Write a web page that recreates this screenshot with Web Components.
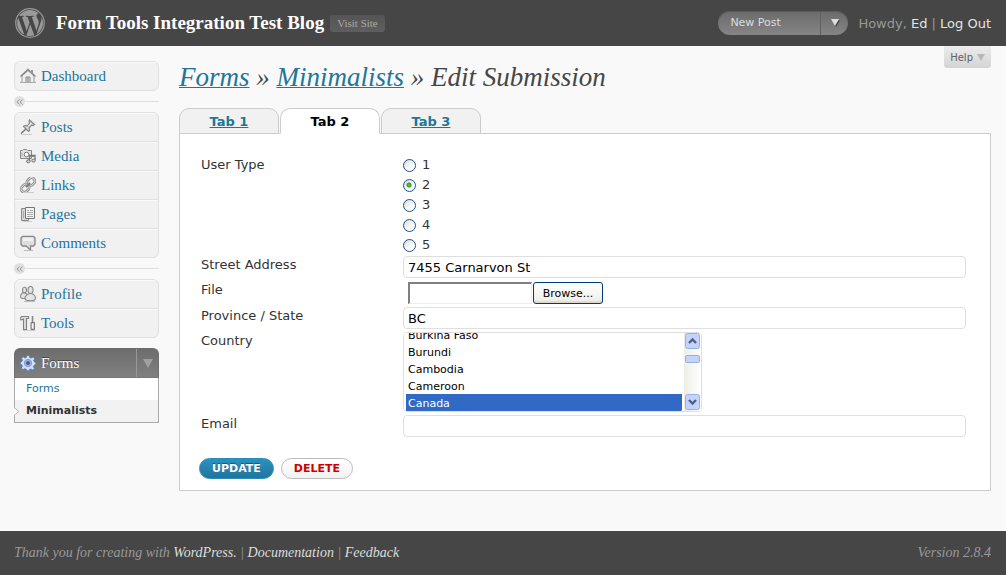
<!DOCTYPE html>
<html lang="en">
<head>
<meta charset="utf-8">
<title>Edit Submission</title>
<style>
  html, body { margin: 0; }
  body {
    background: #f9f9f9;
    color: #333;
    font-family: "DejaVu Sans", sans-serif;
    font-size: 13px;
    --serif: "Liberation Serif", serif;
    --link: #21759b;
    --dark: #464646;
  }
</style>
</head>
<body>
<wp-admin>
  <wp-header slot="header" blog="Form Tools Integration Test Blog" user="Ed"></wp-header>

  <wp-menu slot="menu">
    <wp-menu-group>
      <wp-menu-item icon="dashboard">Dashboard</wp-menu-item>
    </wp-menu-group>
    <wp-menu-separator></wp-menu-separator>
    <wp-menu-group>
      <wp-menu-item icon="posts">Posts</wp-menu-item>
      <wp-menu-item icon="media">Media</wp-menu-item>
      <wp-menu-item icon="links">Links</wp-menu-item>
      <wp-menu-item icon="pages">Pages</wp-menu-item>
      <wp-menu-item icon="comments">Comments</wp-menu-item>
    </wp-menu-group>
    <wp-menu-separator></wp-menu-separator>
    <wp-menu-group>
      <wp-menu-item icon="profile">Profile</wp-menu-item>
      <wp-menu-item icon="tools">Tools</wp-menu-item>
    </wp-menu-group>
    <wp-open-menu heading="Forms">
      <wp-submenu-item>Forms</wp-submenu-item>
      <wp-submenu-item current>Minimalists</wp-submenu-item>
    </wp-open-menu>
  </wp-menu>

  <page-title>
    <a href="#forms">Forms</a> » <a href="#minimalists">Minimalists</a> » Edit Submission
  </page-title>
  <tab-bar>
    <tab-item>Tab 1</tab-item>
    <tab-item current>Tab 2</tab-item>
    <tab-item>Tab 3</tab-item>
  </tab-bar>
  <submission-form></submission-form>

  <wp-footer slot="footer"></wp-footer>
</wp-admin>

<script>
const define = (name, html, setup) => {
  const template = document.createElement('template');
  template.innerHTML = html;
  customElements.define(name, class extends HTMLElement {
    constructor() {
      super();
      this.attachShadow({ mode: 'open' }).append(template.content.cloneNode(true));
    }
    connectedCallback() {
      if (setup) setup(this, this.shadowRoot);
    }
  });
};

/* Menu icons, all on a 16 x 16 grid */
const ICONS = {
  dashboard: `<path d="M2 8v6.500h12V8L8 2.500z" fill="#eee" stroke="#999"/><path d="M.5 8.500L8 1.500l7.500 7" fill="none" stroke="#888" stroke-width="1.400"/><path d="M12 2v3" stroke="#999" stroke-width="2"/><path d="M6 14.500V9h4v5.500M8 9v5" fill="#ddd" stroke="#888"/><path d="M0 14.500h16" stroke="#aaa"/>`,
  posts: `<path d="M9.500 1l5 4.500-1.500 1-1.500-.3-2.300 2.600.3 2.700-1 1L3.500 7.500l1-1 3 .2L9.500 4.300 9 2.500z" fill="#d5d5d5" stroke="#888" stroke-width="1.200"/><path d="M6 10L1 14.500" stroke="#777" stroke-width="1.500"/><path d="M8.500 7l2.500-2.700" stroke="#fff"/><path d="M1 15.500h11" stroke="#ccc"/>`,
  media: `<path d="M.5 2.500h2l1-1h3l1 1h4v8H.500z" fill="#e4e4e4" stroke="#888"/><circle cx="6.500" cy="6.500" r="2.300" fill="#fff" stroke="#777"/><path d="M2 4.500v4" stroke="#aaa"/><path d="M9.500 13V7.500h5.500V12" fill="none" stroke="#777" stroke-width="1.300"/><path d="M9.500 8.500h5" stroke="#888"/><ellipse cx="8.300" cy="13.300" rx="1.800" ry="1.500" fill="#ccc" stroke="#777"/><ellipse cx="13.500" cy="12.600" rx="1.800" ry="1.500" fill="#ccc" stroke="#777"/>`,
  links: `<g fill="none" transform="rotate(-45 8 8)"><rect x="8" y="4.500" width="8.500" height="6.500" rx="3.200" stroke="#808080" stroke-width="2.600"/><rect x="8" y="4.500" width="8.500" height="6.500" rx="3.200" stroke="#ddd" stroke-width="1"/><rect x="-.5" y="5" width="8.500" height="6.500" rx="3.200" stroke="#808080" stroke-width="2.600"/><rect x="-.5" y="5" width="8.500" height="6.500" rx="3.200" stroke="#ddd" stroke-width="1"/><path d="M5 8h6" stroke="#777" stroke-width="1.600"/></g><path d="M3 15.500h11" stroke="#ccc"/>`,
  pages: `<path d="M1.500 2.500h7v12h-7z" fill="#d5d5d5" stroke="#888"/><path d="M3.500 5v7" stroke="#aaa"/><path d="M5.500 1.500h9v11h-9z" fill="#f4f4f4" stroke="#777"/><path d="M7 4.500h2M10 4.500h3M7 6.500h6M7 8.500h6M7 10.500h6" stroke="#aaa"/><path d="M3 15.500h9" stroke="#ccc"/>`,
  comments: `<path d="M2.500 1.500h11l1.500 1.500v6.500L13.500 11h-3v4L6 11H2.500L1 9.500V3z" fill="#ddd" stroke="#888" stroke-width="1.300"/><path d="M3 3.500h10M3 5h10" stroke="#f2f2f2" stroke-width="2"/><path d="M4 15.500h9" stroke="#bbb"/>`,
  profile: `<g fill="#e4e4e4" stroke="#888" stroke-width="1.100"><path d="M4 6.500C0 7 0 12 2 12.500h5V8z"/><ellipse cx="4.500" cy="4" rx="2" ry="2.800"/><path d="M10 7.500c-5 1-6 5-4 6.500 2 1 6.500 1 8.500 0 2-2 .5-5.500-3-6.500z"/><ellipse cx="10.500" cy="4" rx="2.500" ry="3.500"/></g><path d="M4 15.500h11" stroke="#bbb"/>`,
  tools: `<path d="M0 3.500L1.500 1.500H8.500v2H6.500V14.500H3.500V4L1 5z" fill="#ddd" stroke="#808080" stroke-width="1.100"/><path d="M12.500 1v6" fill="none" stroke="#888" stroke-width="1.600"/><path d="M11 7.500h3.500v7H11z" fill="#ccc" stroke="#777"/><path d="M12.700 9v4" stroke="#fff"/><path d="M3 15.500h12" stroke="#ccc"/>`
};

define('wp-admin', `
  <style>
    :host { display: flex; flex-direction: column; min-height: 100vh; }
    .body { flex: 1; display: flex; align-items: flex-start; gap: 20px; padding: 15px 15px 40px 14px; }
    nav { flex: none; width: 145px; }
    main { flex: 1; min-width: 0; }
  </style>
  <slot name="header"></slot>
  <div class="body">
    <nav><slot name="menu"></slot></nav>
    <main><slot></slot></main>
  </div>
  <slot name="footer"></slot>
`);

define('wp-header', `
  <style>
    :host { display: block; }
    header { position: relative; display: flex; align-items: center; height: 46px; padding: 0 15px; background: var(--dark); color: #999; }
    a { color: #e4e4e4; text-decoration: none; }
    .logo { width: 30px; height: 30px; flex: none; }
    h1 { margin: 0 6px 0 11px; font: bold 19px/24px var(--serif); }
    h1 a { color: #fff; }
    .visit { padding: 0 7px; font: 11px/17px var(--serif); color: #aaa; background: linear-gradient(#555, #5e5e5e); border-radius: 3px; }
    .new { display: flex; align-items: stretch; margin-left: auto; height: 24px; border-radius: 12px; overflow: hidden;
      background: linear-gradient(#6b6b6b, #858585); box-shadow: inset 0 1px 1px #5a5a5a; }
    .new a { flex: none; width: 90px; padding-left: 12px; font-size: 11px; line-height: 24px; color: #ddd; }
    .new button { width: 28px; padding: 0 0 0 1px; border: 0; border-left: 1px solid #606060; background: none; }
    .new svg { display: block; margin: auto; }
    p { margin: 0 0 0 10px; white-space: nowrap; }
    .help { position: absolute; right: 15px; top: 46px; display: flex; align-items: center; gap: 4px; height: 22px; padding: 0 6px;
      border: 0; border-radius: 0 0 3px 3px; background: linear-gradient(#ececec, #d4d4d4); color: #606060; font: inherit; font-size: 10px; }
  </style>
  <header>
    <svg class="logo" viewBox="0 0 24 24" fill="#999" aria-hidden="true">
      <circle cx="12" cy="12" r="11.400" fill="none" stroke="#999" stroke-width="1"/>
      <path transform="translate(.5 .5) scale(.96)" d="M21.469 6.825c.84 1.537 1.318 3.300 1.318 5.175 0 3.979-2.156 7.456-5.363 9.325l3.295-9.527c.615-1.540.820-2.771.820-3.864 0-.405-.026-.780-.070-1.110m-7.981.105c.647-.030 1.232-.105 1.232-.105.582-.075.514-.930-.067-.899 0 0-1.755.135-2.880.135-1.064 0-2.850-.150-2.850-.150-.585-.030-.661.855-.075.885 0 0 .540.061 1.125.090l1.680 4.605-2.370 7.080L5.354 6.900c.649-.030 1.234-.100 1.234-.100.585-.075.516-.930-.065-.896 0 0-1.746.138-2.874.138-.200 0-.438-.008-.690-.015C4.911 3.150 8.235 1.215 12 1.215c2.809 0 5.365 1.072 7.286 2.833-.046-.003-.091-.009-.141-.009-1.060 0-1.812.923-1.812 1.914 0 .890.513 1.643 1.060 2.531.411.720.890 1.643.890 2.977 0 .915-.354 1.994-.821 3.479l-1.075 3.585-3.900-11.610.001.014zM12 22.784c-1.059 0-2.081-.153-3.048-.437l3.237-9.406 3.315 9.087c.024.053.050.101.078.149-1.120.393-2.325.609-3.582.609M1.211 12c0-1.564.336-3.050.935-4.390L7.290 21.709C3.694 19.960 1.212 16.271 1.211 12"/>
    </svg>
    <h1><a href="#home" id="blog"></a></h1>
    <a class="visit" href="#site">Visit Site</a>
    <div class="new">
      <a href="#new-post">New Post</a>
      <button type="button" aria-label="More actions"><svg width="9" height="8" viewBox="0 0 9 8"><path d="M1.500 1.500h7.500L5 8z" fill="#444"/><path d="M0 0h8L4 7z" fill="#ddd"/></svg></button>
    </div>
    <p>Howdy, <a href="#profile" id="user"></a> | <a href="#logout">Log Out</a></p>
    <button class="help" type="button">Help <svg width="8" height="7" viewBox="0 0 8 7" aria-hidden="true"><path d="M0 0h8L4 7z" fill="#b8b8b8"/></svg></button>
  </header>
`, (host, root) => {
  root.getElementById('blog').textContent = host.getAttribute('blog');
  root.getElementById('user').textContent = host.getAttribute('user');
});

define('wp-menu', `
  <style>:host { display: block; }</style>
  <slot></slot>
`);

define('wp-menu-group', `
  <style>
    :host { display: block; border: 1px solid #e0e0e0; border-radius: 6px; background: #f1f1f1; overflow: hidden; }
    ::slotted(:not(:first-child)) { border-top: 1px solid #dfdfdf; }
  </style>
  <slot></slot>
`);

define('wp-menu-item', `
  <style>
    :host { display: block; font: 15px/27px var(--serif); }
    a { display: flex; align-items: center; gap: 5px; height: 28px; padding-left: 5px; box-sizing: border-box; color: var(--link); text-decoration: none; box-shadow: inset 0 1px #fafafa; }
    svg { width: 16px; height: 16px; flex: none; }
  </style>
  <a><svg viewBox="0 0 16 16" aria-hidden="true"></svg><slot></slot></a>
`, (host, root) => {
  root.querySelector('svg').innerHTML = ICONS[host.getAttribute('icon')];
  root.querySelector('a').href = '#' + host.getAttribute('icon');
});

define('wp-menu-separator', `
  <style>
    :host { display: flex; align-items: center; height: 21px; }
    button { width: 11px; height: 11px; padding: 0; border: 0; border-radius: 50%; background: #e0e0e0; flex: none; }
    svg { display: block; margin: auto; }
    i { flex: 1; height: 1px; background: #dfdfdf; }
  </style>
  <button type="button" aria-label="Collapse menu"><svg width="7" height="6" viewBox="0 0 7 6" fill="none" stroke="#999"><path d="M3.500.5L1 3l2.500 2.500M6.500.5L4 3l2.500 2.500"/></svg></button>
  <i></i>
`);

define('wp-open-menu', `
  <style>
    :host { display: block; margin-top: 10px; }
    .head { display: flex; height: 30px; border-radius: 6px 6px 0 0; background: linear-gradient(#6d6d6d, #808080); overflow: hidden; box-sizing: border-box; border: 1px solid #6d6d6d; border-bottom-color: #777; }
    .head a { flex: 1; display: flex; align-items: center; gap: 5px; padding-left: 5px; color: #fff; font: 15px/27px var(--serif); text-decoration: none; text-shadow: 0 -1px 0 #444; }
    .head button { width: 22px; padding: 0; border: 0; border-left: 1px solid #999; background: none; }
    .head button svg { display: block; margin: auto; }
    .items { border: 1px solid #aaa; border-top: 0; background: #fff; }
  </style>
  <div class="head">
    <a href="#forms">
      <svg width="16" height="16" viewBox="0 0 16 16" aria-hidden="true"><path d="M6.800.5h2.400l.5 2 1.500.6L13 2l1.700 1.700-1.100 1.800.6 1.300 1.500.5v2.400l-1.700.5-.6 1.500 1.100 1.800L12.700 15l-1.800-1-1.300.6-.5 1.200H6.800l-.5-1.500-1.500-.6L3 14.700 1.300 13l1.100-1.800-.6-1.400-1.500-.5V7l1.600-.5.6-1.500L1.400 3.400 3.200 1.800 4.900 3l1.400-.6z" fill="#cfe0fb" stroke="#4a6fb5" stroke-width=".7"/><circle cx="8" cy="8" r="3.600" fill="#9db6e6" stroke="#7e9bd6"/><circle cx="8" cy="8" r="2" fill="#555d70"/></svg>
      <span></span>
    </a>
    <button type="button" aria-label="Toggle submenu"><svg width="10" height="9" viewBox="0 0 10 9"><path d="M0 0h10L5 9z" fill="#a0a0a0"/></svg></button>
  </div>
  <div class="items"><slot></slot></div>
`, (host, root) => {
  root.querySelector('span').textContent = host.getAttribute('heading');
});

define('wp-submenu-item', `
  <style>
    :host { display: block; position: relative; font-size: 11px; line-height: 22px; }
    a { display: block; padding-left: 11px; color: var(--link); text-decoration: none; }
    svg { display: none; position: absolute; left: -1px; top: 7px; }
    :host([current]) { background: #f2f2f2; }
    :host([current]) a { color: #333; font-weight: bold; }
    :host([current]) svg { display: block; }
  </style>
  <a href="#list"><slot></slot></a>
  <svg width="6" height="9" viewBox="0 0 6 9" aria-hidden="true"><path d="M0 .5l5 4-5 4" fill="#f9f9f9" stroke="#b4b4b4"/></svg>
`);

define('page-title', `
  <style>
    :host { display: block; }
    h2 { margin: 0 0 15px; font: italic 27px/32px var(--serif); color: #464646; }
    ::slotted(a) { color: var(--link); text-decoration-thickness: 1px; }
  </style>
  <h2><slot></slot></h2>
`);

define('tab-bar', `
  <style>
    :host { display: flex; gap: 1px; margin-bottom: -1px; position: relative; }
  </style>
  <slot></slot>
`);

define('tab-item', `
  <style>
    :host { width: 100px; height: 26px; box-sizing: border-box; border: 1px solid #ccc; border-radius: 10px 10px 0 0; background: #f1f1f1; text-align: center; font-weight: bold; line-height: 25px; }
    a { color: var(--link); }
    :host([current]) { background: #fff; border-bottom-color: #fff; }
    :host([current]) a { color: #000; text-decoration: none; }
  </style>
  <a href="#tab"><slot></slot></a>
`);

const COUNTRIES = `Afghanistan|Albania|Algeria|American Samoa|Andorra|Angola|Anguilla|Antarctica|Antigua and Barbuda|Argentina|Armenia|Aruba|Australia|Austria|Azerbaijan|Bahamas|Bahrain|Bangladesh|Barbados|Belarus|Belgium|Belize|Benin|Bermuda|Bhutan|Bolivia|Bosnia and Herzegovina|Botswana|Brazil|Brunei|Bulgaria|Burkina Faso|Burundi|Cambodia|Cameroon|Canada|Cape Verde|Cayman Islands|Central African Republic|Chad|Chile|China|Christmas Island|Colombia|Comoros|Congo|Cook Islands|Costa Rica|Croatia|Cuba|Cyprus|Czech Republic|Denmark|Djibouti|Dominica|Dominican Republic|Ecuador|Egypt|El Salvador|Equatorial Guinea|Eritrea|Estonia|Ethiopia|Falkland Islands|Faroe Islands|Fiji|Finland|France|French Guiana|French Polynesia|Gabon|Gambia|Georgia|Germany|Ghana|Gibraltar|Greece|Greenland|Grenada|Guadeloupe|Guam|Guatemala|Guinea|Guyana|Haiti|Honduras|Hong Kong|Hungary|Iceland|India|Indonesia|Iran|Iraq|Ireland|Israel|Italy|Jamaica|Japan|Jordan|Kazakhstan|Kenya|Kiribati|Kuwait|Kyrgyzstan|Laos|Latvia|Lebanon|Lesotho|Liberia|Libya|Liechtenstein|Lithuania|Luxembourg|Macau|Macedonia|Madagascar|Malawi|Malaysia|Maldives|Mali|Malta|Marshall Islands|Martinique|Mauritania|Mauritius|Mexico|Micronesia|Moldova|Monaco|Mongolia|Montserrat|Morocco|Mozambique|Myanmar|Namibia|Nauru|Nepal|Netherlands|New Caledonia|New Zealand|Nicaragua|Niger|Nigeria|Niue|Norfolk Island|Norway|Oman|Pakistan|Palau|Panama|Papua New Guinea|Paraguay|Peru|Philippines|Poland|Portugal|Puerto Rico|Qatar|Reunion|Romania|Russia|Rwanda|Saint Lucia|Samoa|San Marino|Saudi Arabia|Senegal|Seychelles|Sierra Leone|Singapore|Slovakia|Slovenia|Solomon Islands|Somalia|South Africa|South Korea|Spain|Sri Lanka|Sudan|Suriname|Swaziland|Sweden|Switzerland|Syria|Taiwan|Tajikistan|Tanzania|Thailand|Togo|Tokelau|Tonga|Trinidad and Tobago|Tunisia|Turkey|Turkmenistan|Tuvalu|Uganda|Ukraine|United Arab Emirates|United Kingdom|United States|Uruguay|Uzbekistan|Vanuatu|Venezuela|Vietnam|Yemen|Zambia|Zimbabwe`.split('|');

define('submission-form', `
  <style>
    :host { display: block; border: 1px solid #ccc; background: #fff; padding: 21px 24px 11px 19px; }
    form { margin: 0; }
    .row { display: grid; grid-template-columns: 204px 1fr; border: 0; margin: 0; padding: 0; line-height: 20px; }
    .name { padding-left: 2px; }
    .cell { padding: 1px 0 2px; display: flex; }
    .radios label { display: flex; align-items: center; gap: 6px; height: 20px; line-height: 22px; }
    input, select, button { font-family: inherit; box-sizing: border-box; margin: 0; }
    input[type=radio] { appearance: none; width: 13px; height: 13px; border: 1px solid #1d5281; border-radius: 50%; background: linear-gradient(135deg, #dcdcd7, #fff 70%); }
    input[type=radio]:checked { background: radial-gradient(circle at 5px 5px, #55d551, #21a121 2px, transparent 3px), linear-gradient(135deg, #dcdcd7, #fff 70%); }
    input[type=text] { width: 100%; height: 22px; padding: 0 4px; border: 1px solid #dfdfdf; border-radius: 4px; background: #fff; color: #000; font-size: 13px; }
    .file { height: 26px; box-sizing: border-box; padding-left: 5px; gap: 1px; }
    .file input[type=text] { width: 124px; height: 22px; margin-top: 1px; border-style: solid; border-color: #808080 #f1efe2 #f1efe2 #808080; border-width: 2px 1px 1px 2px; border-radius: 0; }
    .file button { width: 70px; height: 22px; margin-top: 1px; padding: 0; border: 1px solid #003c74; border-radius: 3px; background: linear-gradient(#fff, #f0f0ea 85%, #d6d0c5); color: #000; font-size: 11px; }
    .list { display: flex; gap: 2px; width: 299px; height: 80px; box-sizing: border-box; border: 1px solid #dfdfdf; border-radius: 4px; overflow: hidden; }
    select { flex: 1; min-width: 0; height: 78px; padding: 0 0 0 2px; border: 0; background: #fff; color: #000; font-size: 11px; outline: 0; scrollbar-width: none; }
    option { height: 17px; padding: 3px 2px 0; line-height: 14px; box-sizing: border-box; }
    option:checked { background: #316ac5 linear-gradient(#316ac5, #316ac5); color: #fff; }
    .bar { flex: none; width: 17px; display: flex; flex-direction: column; background: linear-gradient(90deg, #eeede5, #fff); }
    .bar button { height: 17px; padding: 0; border: 0; background: none; }
    .bar svg { display: block; }
    .track { flex: 1; padding: 5px 1px 0; }
    .thumb { height: 8px; box-sizing: border-box; border: 1px solid #98b1e4; border-radius: 2px; background: #c3d3fd; }
    .actions { display: flex; gap: 7px; margin-top: 19px; }
    .actions button { height: 21px; padding: 0 12px; border: 1px solid #bbb; border-radius: 11px; background: linear-gradient(#fff, #f2f2f2); color: #c00; font-size: 11px; font-weight: bold; }
    .actions .primary { border-color: #298cba; background: linear-gradient(#2a92c0, #21759b); color: #fff; text-shadow: 0 -1px 0 #1c5a78; }
  </style>
  <form>
    <div class="row" role="radiogroup" aria-labelledby="type-name">
      <span class="name" id="type-name">User Type</span>
      <div class="radios">
        <label><input type="radio" name="type" value="1">1</label>
        <label><input type="radio" name="type" value="2" checked>2</label>
        <label><input type="radio" name="type" value="3">3</label>
        <label><input type="radio" name="type" value="4">4</label>
        <label><input type="radio" name="type" value="5">5</label>
      </div>
    </div>
    <div class="row"><label class="name" for="street">Street Address</label><div class="cell"><input type="text" id="street" value="7455 Carnarvon St"></div></div>
    <div class="row"><label class="name" for="file">File</label><div class="cell file"><input type="text" id="file"><button type="button">Browse...</button></div></div>
    <div class="row"><label class="name" for="state">Province / State</label><div class="cell"><input type="text" id="state" value="BC"></div></div>
    <div class="row">
      <label class="name" for="country">Country</label>
      <div class="cell">
        <div class="list">
          <select id="country" size="5"></select>
          <div class="bar">
            <button type="button" id="up" aria-label="Scroll up"><svg width="17" height="17" viewBox="0 0 17 17"><rect x="1.500" y=".5" width="14" height="15" rx="2" fill="#c3d3fd" stroke="#98b1e4"/><path d="M5 10l3.500-3.500L12 10" fill="none" stroke="#4d6185" stroke-width="2.400"/></svg></button>
            <div class="track"><div class="thumb"></div></div>
            <button type="button" id="down" aria-label="Scroll down"><svg width="17" height="17" viewBox="0 0 17 17"><rect x="1.500" y=".5" width="14" height="15" rx="2" fill="#c3d3fd" stroke="#98b1e4"/><path d="M5 6l3.500 3.500L12 6" fill="none" stroke="#4d6185" stroke-width="2.400"/></svg></button>
          </div>
        </div>
      </div>
    </div>
    <div class="row"><label class="name" for="email">Email</label><div class="cell"><input type="text" id="email"></div></div>
    <div class="actions">
      <button class="primary" type="button">UPDATE</button>
      <button type="button">DELETE</button>
    </div>
  </form>
`, (host, root) => {
  const select = root.getElementById('country');
  for (const name of COUNTRIES) select.add(new Option(name, name, name === 'Canada', name === 'Canada'));
  /* Bring the chosen country to the bottom of the list */
  const reveal = () => {
    const option = select.selectedOptions[0];
    select.scrollTop = (option.index + 1) * option.offsetHeight - select.clientHeight;
  };
  reveal();
  requestAnimationFrame(reveal);
  root.getElementById('up').onclick = () => { select.scrollTop -= 17; };
  root.getElementById('down').onclick = () => { select.scrollTop += 17; };
});

define('wp-footer', `
  <style>
    :host { display: block; }
    footer { display: flex; justify-content: space-between; padding: 11px 15px 11px 14px; background: var(--dark); color: #999; font: italic 14px/22px var(--serif); }
    p { margin: 0; }
    a { color: #ddd; text-decoration: none; }
  </style>
  <footer>
    <p>Thank you for creating with <a href="#wordpress">WordPress.</a> | <a href="#docs">Documentation</a> | <a href="#feedback">Feedback</a></p>
    <p>Version 2.8.4</p>
  </footer>
`);
</script>
</body>
</html>
